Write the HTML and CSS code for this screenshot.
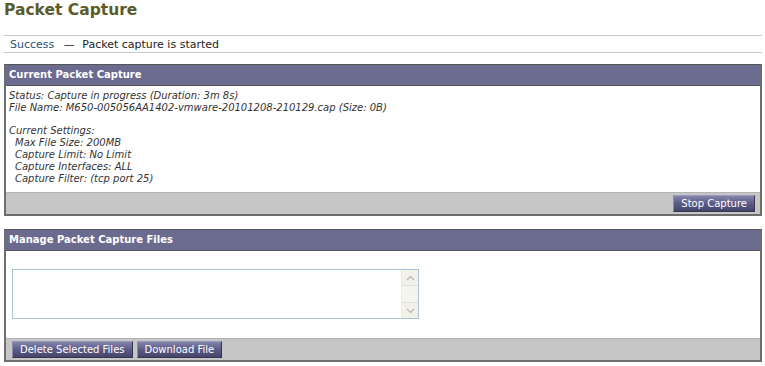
FILE: index.html
```html
<!DOCTYPE html>
<html lang="en">
<head>
    <meta charset="UTF-8">
    <title>Packet Capture</title>
    <link rel="stylesheet" href="styles.css">
</head>
<body>
    <h1 class="page-title">Packet Capture</h1>

    <div class="notice">
        <span class="notice-label">Success</span>
        <span class="notice-dash">&mdash;</span>
        <span class="notice-text">Packet capture is started</span>
    </div>

    <div class="panel">
        <div class="panel-head">Current Packet Capture</div>
        <div class="panel-body status">
            <p>Status: Capture in progress (Duration: 3m 8s)</p>
            <p>File Name: M650-005056AA1402-vmware-20101208-210129.cap (Size: 0B)</p>
            <p class="spacer">Current Settings:</p>
            <p class="indent">Max File Size: 200MB</p>
            <p class="indent">Capture Limit: No Limit</p>
            <p class="indent">Capture Interfaces: ALL</p>
            <p class="indent">Capture Filter: (tcp port 25)</p>
        </div>
        <div class="panel-foot right">
            <button class="btn">Stop Capture</button>
        </div>
    </div>

    <div class="panel">
        <div class="panel-head">Manage Packet Capture Files</div>
        <div class="panel-body files">
            <div class="file-list">
                <div class="file-items"></div>
                <div class="scrollbar">
                    <span class="arrow">
                        <svg width="9" height="6" viewBox="0 0 9 6"><path d="M1 5 L4.5 1.5 L8 5" fill="none" stroke="#b8b8b0" stroke-width="1.2"/></svg>
                    </span>
                    <span class="track"></span>
                    <span class="arrow">
                        <svg width="9" height="6" viewBox="0 0 9 6"><path d="M1 1 L4.5 4.5 L8 1" fill="none" stroke="#b8b8b0" stroke-width="1.2"/></svg>
                    </span>
                </div>
            </div>
        </div>
        <div class="panel-foot">
            <button class="btn">Delete Selected Files</button>
            <button class="btn">Download File</button>
        </div>
    </div>
</body>
</html>
```

FILE: styles.css
```css
body {
    font-family: 'DejaVu Sans', Verdana, sans-serif;
    font-size: 11px;
    color: #222;
    background: #fff;
    margin: 0;
    padding: 0 3px 0 4px;
}
.page-title {
    font-size: 15.5px;
    font-weight: bold;
    color: #5b5b2b;
    margin: 0;
    padding-top: 1px;
    height: 34px;
    line-height: 18px;
}
.notice {
    border-top: 1px solid #c9c9d6;
    border-bottom: 1px solid #c9c9d6;
    height: 16px;
    line-height: 17px;
    padding-left: 6px;
    margin-bottom: 11px;
}
.notice-label {
    color: #2b4f7a;
}
.notice-dash {
    margin: 0 4px 0 6px;
}
.panel {
    border: 2px solid #6d6d6d;
    border-top: 1px solid #555;
    margin-bottom: 13px;
}
.panel-head {
    background: #6b6b8f;
    color: #fff;
    font-weight: bold;
    font-size: 10px;
    height: 20px;
    line-height: 20px;
    padding-left: 3px;
    border-bottom: 1px solid #555;
}
.panel-body {
    background: #fff;
}
.status {
    font-style: italic;
    font-size: 10px;
    color: #333;
    padding: 4px 3px 7px 3px;
}
.status p {
    margin: 0;
    line-height: 12px;
}
.status .spacer {
    margin-top: 11px;
}
.status .indent {
    padding-left: 6px;
}
.panel-foot {
    background: #c6c6c6;
    border-top: 1px solid #b4b4b4;
    height: 19px;
    padding: 2px 5px 0 6px;
    display: flex;
    gap: 4px;
}
.panel-foot.right {
    justify-content: flex-end;
}
.btn {
    font-family: 'DejaVu Sans', Verdana, sans-serif;
    font-size: 10px;
    color: #fff;
    background: linear-gradient(#8383ab, #5b5b87 50%, #45456c);
    border: 1px solid #35354d;
    border-top-color: #9a9abc;
    border-left-color: #8a8aae;
    height: 17px;
    padding: 0 7px;
    margin: 0;
    line-height: 15px;
}
.files {
    height: 87px;
    padding: 18px 0 0 6px;
    box-sizing: border-box;
}
.file-list {
    width: 407px;
    height: 50px;
    border: 1px solid #a9c3d3;
    box-sizing: border-box;
    display: flex;
}
.file-items {
    flex: 1;
}
.scrollbar {
    width: 16px;
    background: #f5f5ef;
    border-left: 1px solid #ececE4;
    display: flex;
    flex-direction: column;
}
.arrow {
    height: 15px;
    display: flex;
    align-items: center;
    justify-content: center;
    background: #f1f1ea;
    border-bottom: 1px solid #e2e2d8;
}
.arrow:last-child {
    border-bottom: none;
    border-top: 1px solid #e2e2d8;
}
.track {
    flex: 1;
}
```
